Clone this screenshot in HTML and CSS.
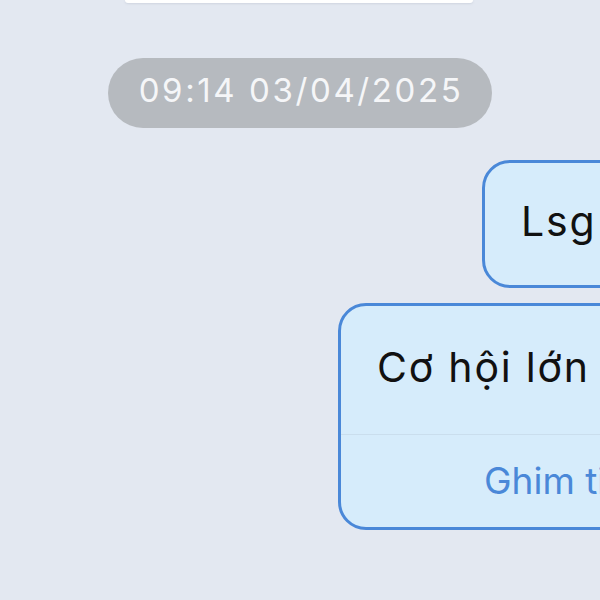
FILE: index.html
```html
<!DOCTYPE html>
<html lang="vi">
<head>
<meta charset="utf-8">
<title>Chat</title>
<link rel="stylesheet" href="styles.css">
</head>
<body>
<div class="chat">
  <div class="card-tail"></div>
  <div class="time-row">
    <span class="time-pill">09:14 03/04/2025</span>
  </div>
  <div class="msg-row msg-row-1">
    <div class="bubble bubble-short">
      <div class="bubble-text">Lsg</div>
    </div>
  </div>
  <div class="msg-row msg-row-2">
    <div class="bubble bubble-pin">
      <div class="bubble-text pin-text">Cơ hội lớn</div>
      <div class="bubble-action">Ghim tin nhắn</div>
    </div>
  </div>
</div>
</body>
</html>
```
FILE: styles.css
```css
html, body {
  margin: 0;
  padding: 0;
}
body {
  width: 600px;
  height: 600px;
  overflow: hidden;
  background: #e3e8f1;
  font-family: "Inter", "Noto Sans", "Liberation Sans", sans-serif;
}
.chat {
  display: flex;
  flex-direction: column;
  width: 600px;
}
.card-tail {
  margin-left: 125px;
  width: 348px;
  height: 3px;
  background: #ffffff;
  border-radius: 0 0 4px 4px;
  box-shadow: 0 1px 2px rgba(150, 160, 180, 0.25);
}
.time-row {
  display: flex;
  justify-content: center;
  margin-top: 55px;
}
.time-pill {
  display: block;
  height: 65px;
  padding: 0 29px 5px 31px;
  line-height: 65px;
  border-radius: 35px;
  background: #b6babf;
  color: #f5f6f8;
  font-size: 33px;
  letter-spacing: 2.6px;
  white-space: nowrap;
}
.msg-row {
  display: flex;
  white-space: nowrap;
}
.msg-row-1 {
  margin-top: 32px;
  padding-left: 482px;
}
.msg-row-2 {
  margin-top: 15px;
  padding-left: 338px;
}
.bubble {
  flex: none;
  background: #d6ecfb;
  border: 3px solid #4a88d8;
  border-radius: 28px;
  color: #111111;
}
.bubble-short {
  width: 260px;
  padding: 34px 36px 40px;
}
.bubble-pin {
  width: 520px;
}
.bubble-text {
  font-size: 41px;
  line-height: 48px;
  letter-spacing: 1.8px;
}
.pin-text {
  padding: 37px 36px 43px;
  border-bottom: 1px solid #cadeed;
}
.bubble-action {
  padding: 24px 0 24px 143px;
  font-size: 37px;
  line-height: 44px;
  color: #4a88d8;
}
```
